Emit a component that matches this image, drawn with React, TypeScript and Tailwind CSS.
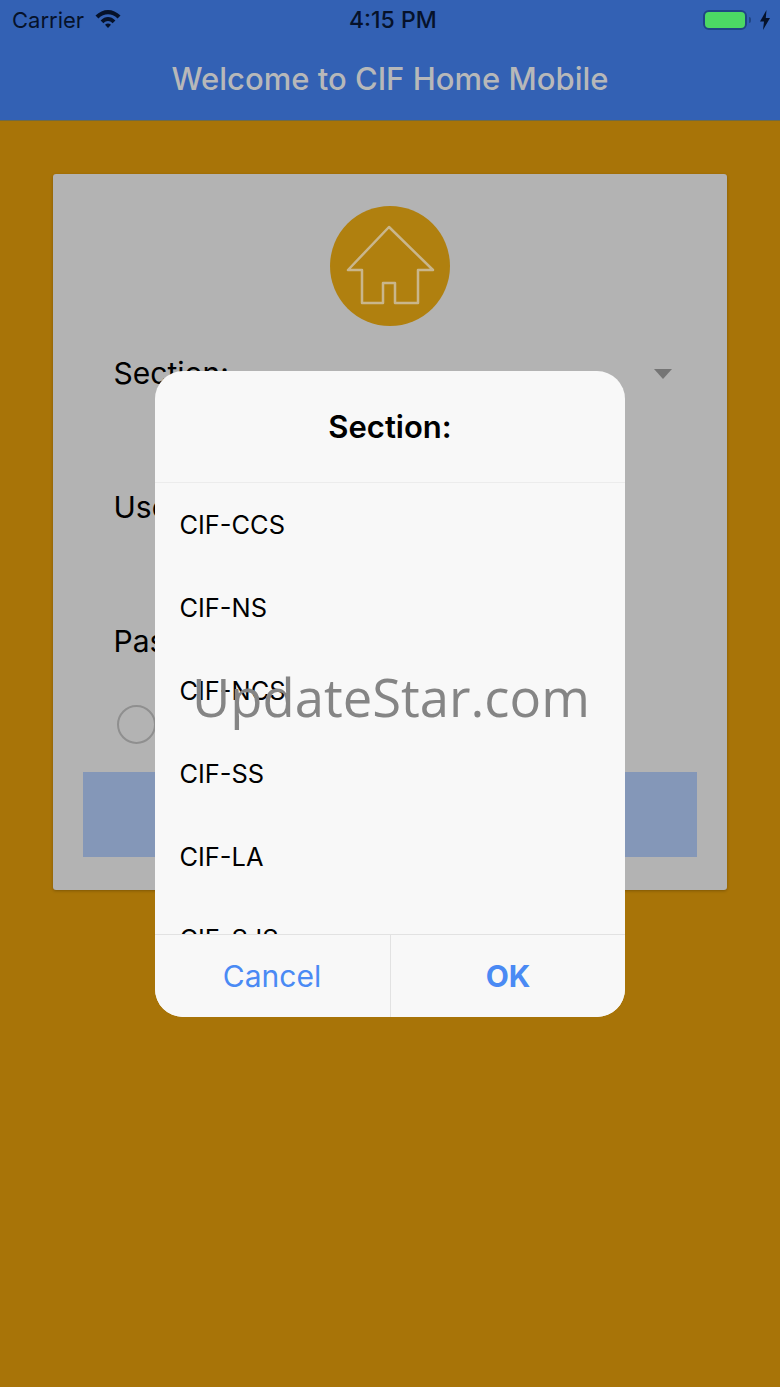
import React from "react";

const sections = ["CIF-CCS", "CIF-NS", "CIF-NCS", "CIF-SS", "CIF-LA", "CIF-SJS"];

const StatusBar = () => (
  <div className="h-[40px] flex items-center justify-between pl-[12px] pr-[9px] relative text-[#06122a]">
    <div className="flex items-center gap-[11px]">
      <span className="text-[22px] leading-none">Carrier</span>
      <svg width="26" height="20" viewBox="0 0 26 20" className="mb-[3px]">
        <path d="M0.5 6.5C8 -1 18 -1 25.5 6.5L22.6 9.5C16.8 3.9 9.2 3.9 3.4 9.5Z" fill="#06122a" />
        <path d="M5.6 11.4C10.4 6.8 15.6 6.8 20.4 11.4L17.6 14.2C14.6 11.4 11.4 11.4 8.4 14.2Z" fill="#06122a" />
        <path d="M10 15.7C12 14.2 14 14.2 16 15.7L13 19Z" fill="#06122a" />
      </svg>
    </div>
    <span className="absolute left-[349px] text-[23px] font-medium leading-none">4:15 PM</span>
    <div className="flex items-center gap-[2px]">
      <div className="w-[44px] h-[20px] rounded-[6px] border-2 border-[#1f4585] bg-[#4cd964]" />
      <div className="w-[2px] h-[6px] bg-[#1f4585] rounded-r-sm" />
      <svg width="12" height="20" viewBox="0 0 12 20" className="ml-[6px]">
        <path d="M7.5 0L1 11.5H5L4 20L11 8H6.8Z" fill="#06122a" />
      </svg>
    </div>
  </div>
);

const Field = ({ label }: { label: string }) => (
  <div className="h-[134px] pl-[60.5px] text-[30px] leading-[36px] text-black">{label}</div>
);

const App = () => {
  return (
    <div className="relative w-[780px] h-[1387px] overflow-hidden bg-[#a87408] font-['Inter',sans-serif]">
      <div className="h-[121px] bg-[#3361b4] border-b border-[#6f6a45]">
        <StatusBar />
        <div className="h-[80px] flex items-center justify-center text-[31px] font-medium text-[#b7b8b9] pb-[1px]">
          Welcome to CIF Home Mobile
        </div>
      </div>

      <div className="mx-[53px] mt-[53px] h-[716px] bg-[#b3b3b3] rounded-[3px] shadow-[0_1px_3px_rgba(0,0,0,0.25)] pt-[32px]">
        <div className="w-[120px] h-[120px] mx-auto rounded-full bg-[#b0800f] flex items-center justify-center">
          <svg width="120" height="120" viewBox="0 0 120 120" fill="none" stroke="#c9b68c" strokeWidth="2.5" strokeLinejoin="round">
            <path d="M59 21L18 64H32V97H53V77H65V97H88V64H103Z" />
          </svg>
        </div>
        <div className="relative pt-[29px]">
          <Field label="Section:" />
          <Field label="Username:" />
          <div className="h-[82px]"><Field label="Password:" /></div>
          <div className="absolute right-[55px] top-[43px] w-0 h-0 border-x-[9px] border-t-[10px] border-x-transparent border-t-[#757575]" />
        </div>
        <div className="ml-[64px] w-[39px] h-[39px] rounded-full border-2 border-[#8f8f8f]" />
        <div className="mx-[30px] mt-[28px] h-[85px] bg-[#8497b8]" />
      </div>

      <div className="absolute left-[155px] top-[371px] w-[470px] h-[646px] rounded-[28px] bg-[#f8f8f8] flex flex-col overflow-hidden">
        <div className="h-[112px] shrink-0 flex items-center justify-center border-b border-[#ececec] text-[31px] font-semibold text-black pt-[2px]">
          Section:
        </div>
        <div className="flex-1 overflow-hidden pt-[1px]">
          {sections.map((s) => (
            <div key={s} className="h-[82.8px] flex items-center pl-[24.5px] text-[25.4px] text-black">
              {s}
            </div>
          ))}
        </div>
        <div className="h-[83px] shrink-0 flex border-t border-[#e2e2e2] bg-[#f8f8f8] text-[30px] text-[#4a8af4]">
          <div className="w-[236px] flex items-center justify-center border-r border-[#e2e2e2] pr-[1px]">Cancel</div>
          <div className="flex-1 flex items-center justify-center font-bold">OK</div>
        </div>
      </div>

      <div className="absolute left-[192px] top-[663px] text-[52.6px] leading-[68px] text-[#858585] font-['Open_Sans',sans-serif]">
        UpdateStar.com
      </div>
    </div>
  );
};

export default App;
